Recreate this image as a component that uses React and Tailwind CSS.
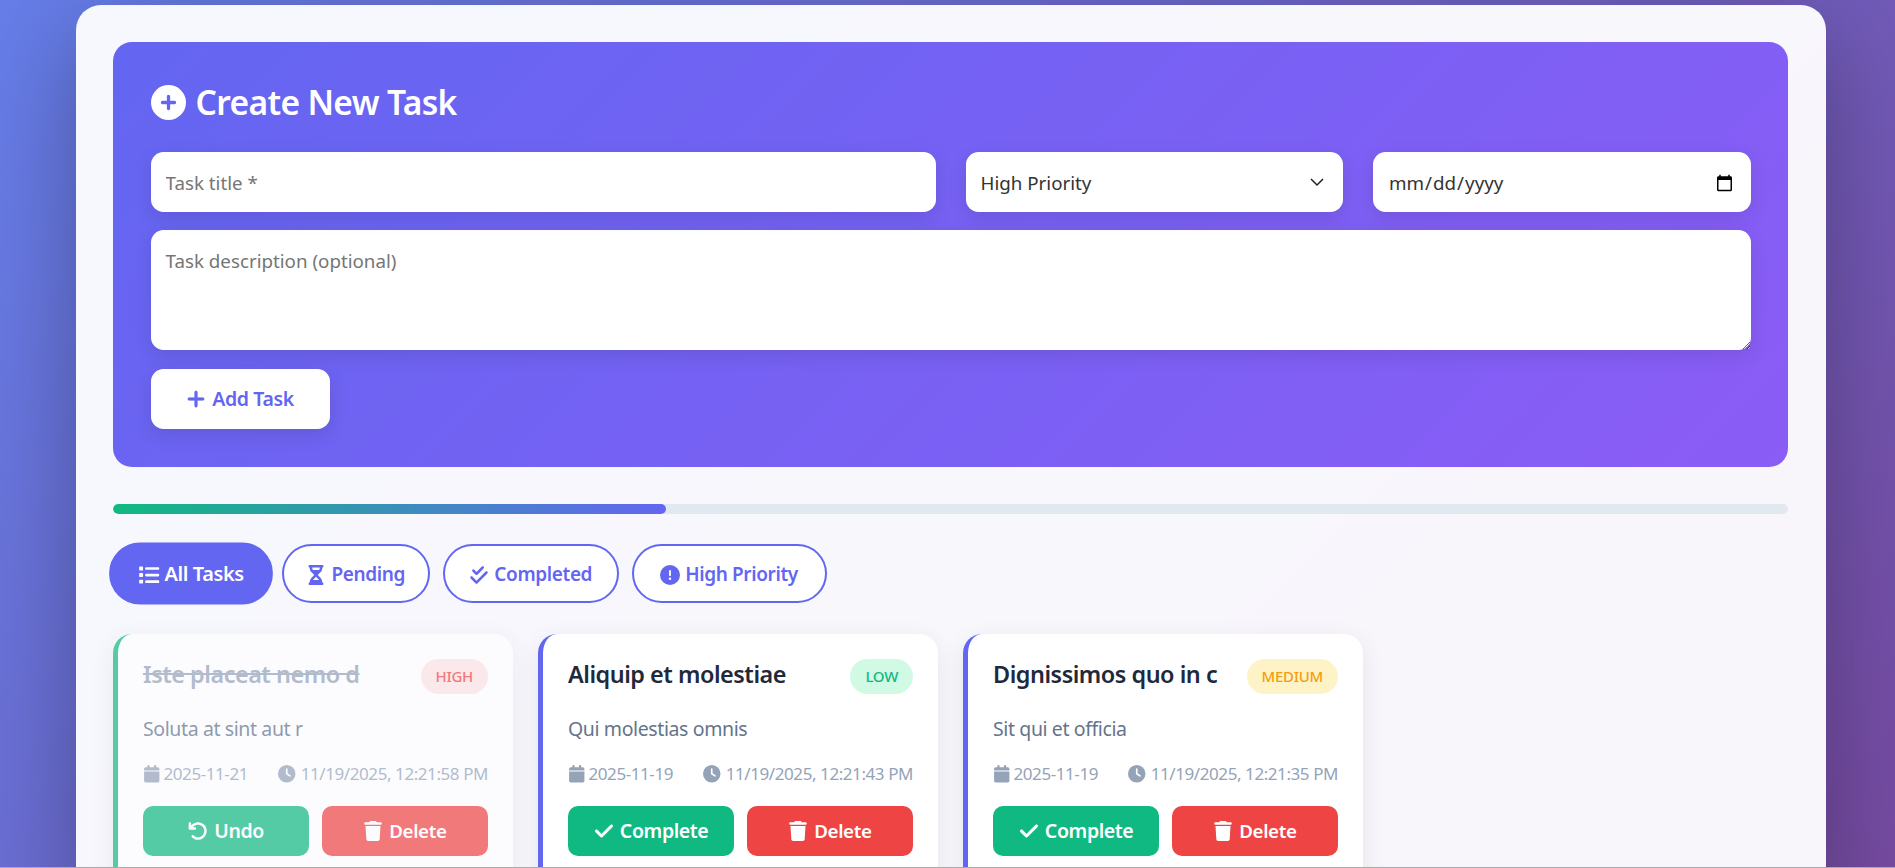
import { FaCirclePlus, FaPlus, FaList, FaHourglassHalf, FaCheckDouble, FaCircleExclamation, FaArrowRotateLeft, FaTrash, FaCheck, FaCalendar, FaClock } from "react-icons/fa6";

const tasks = [
  { title: "Iste placeat nemo d", desc: "Soluta at sint aut r", priority: "high", due: "2025-11-21", created: "11/19/2025, 12:21:58 PM", done: true },
  { title: "Aliquip et molestiae", desc: "Qui molestias omnis", priority: "low", due: "2025-11-19", created: "11/19/2025, 12:21:43 PM", done: false },
  { title: "Dignissimos quo in c", desc: "Sit qui et officia", priority: "medium", due: "2025-11-19", created: "11/19/2025, 12:21:35 PM", done: false },
];

const badgeClass = {
  high: "bg-[#fee2e2] text-[#ef4444]",
  low: "bg-[#d1fae5] text-[#10b981]",
  medium: "bg-[#fef3c7] text-[#f59e0b]",
};

const filters = [
  { label: "All Tasks", Icon: FaList, width: "w-[156px]", active: true },
  { label: "Pending", Icon: FaHourglassHalf, width: "w-[148.5px]" },
  { label: "Completed", Icon: FaCheckDouble, width: "w-[176.5px]" },
  { label: "High Priority", Icon: FaCircleExclamation, width: "w-[195px]" },
];

const fieldClass = "h-[60px] w-full rounded-[12.5px] bg-white px-[15px] text-[18.75px] text-[#333] shadow-[0_6px_19px_rgba(0,0,0,0.1)] outline-none placeholder:text-[#757575]";

const TaskCard = ({ task }) => (
  <div className={`w-[400px] h-[260px] rounded-[19px] border-l-[5px] bg-white p-[25px] shadow-[0_6px_25px_rgba(0,0,0,0.08)] ${task.done ? "border-[#10b981] opacity-70" : "border-[#6366f1]"}`}>
    <div className="flex h-[35px] items-start justify-between">
      <h3 className={`text-[23.4px] leading-[30px] font-semibold tracking-[-0.02em] ${task.done ? "text-[#94a3b8] line-through" : "text-[#1e293b]"}`}>{task.title}</h3>
      <span className={`flex h-[35px] items-center rounded-full px-[15px] text-[15px] font-medium uppercase tracking-[-0.02em] ${badgeClass[task.priority]}`}>{task.priority}</span>
    </div>
    <p className="mt-[20px] text-[19.5px] leading-[30px] tracking-[-0.02em] text-[#64748b]">{task.desc}</p>
    <div className="mt-[17px] flex h-[26px] items-center justify-between text-[17px] tracking-[-0.025em] text-[#94a3b8]">
      <span className="flex items-center gap-[3px]"><FaCalendar className="text-[17.5px]" />{task.due}</span>
      <span className="flex items-center gap-[5px]"><FaClock className="text-[17.5px]" />{task.created}</span>
    </div>
    <div className="mt-[19px] flex gap-[12.5px]">
      <button className="flex h-[50px] flex-1 items-center justify-center gap-[6px] rounded-[10px] bg-[#10b981] text-[19.5px] font-semibold tracking-[-0.02em] text-white">
        {task.done ? <FaArrowRotateLeft className="text-[20px]" /> : <FaCheck className="stroke-[16] text-[20px]" />}
        {task.done ? "Undo" : "Complete"}
      </button>
      <button className="flex h-[50px] flex-1 items-center justify-center gap-[6px] rounded-[10px] bg-[#ef4444] text-[18.75px] font-semibold tracking-[-0.02em] text-white">
        <FaTrash className="text-[20px]" />
        Delete
      </button>
    </div>
  </div>
);

export default function App() {
  return (
    <div className="h-screen overflow-hidden border-b border-[#aaa] bg-[linear-gradient(135deg,#667eea_0%,#764ba2_100%)] pt-[5px] pr-[69px] pl-[76px] font-['Noto_Sans',sans-serif]">
      <div className="h-[900px] rounded-[25px] bg-white/95 py-[37px] pr-[38px] pl-[37px] shadow-[0_25px_100px_rgba(0,0,0,0.3)]">
        <div className="rounded-[19px] bg-[linear-gradient(135deg,#6366f1_0%,#8b5cf6_100%)] px-[37.5px] pt-[37.5px] pb-[38px]">
          <h2 className="mb-[27px] flex h-[45px] items-center gap-[10px] text-[33.6px] font-semibold tracking-[-0.02em] text-white">
            <FaCirclePlus className="text-[35px]" />
            Create New Task
          </h2>
          <div className="grid grid-cols-[785px_1fr_1fr] gap-[30px]">
            <input className={`${fieldClass} pt-[2px]`} placeholder="Task title *" />
            <div className="relative">
              <select defaultValue="high" className={`${fieldClass} appearance-none pt-[3px]`}>
                <option value="low">Low Priority</option>
                <option value="medium">Medium Priority</option>
                <option value="high">High Priority</option>
              </select>
              <svg className="absolute top-[25px] right-[19px] h-[10px] w-[14px]" viewBox="0 0 14 10" fill="none" stroke="#222" strokeWidth="1.5"><path d="M1 2l6 6 6-6" /></svg>
            </div>
            <input type="date" className={`${fieldClass} pt-[3px]`} />
          </div>
          <textarea className={`${fieldClass} mt-[18px] block h-[120px] pt-[17px] pb-[13px]`} placeholder="Task description (optional)" />
          <button className="mt-[19.5px] flex h-[60px] w-[179px] items-center justify-center gap-[6px] rounded-[12.5px] bg-white text-[19.5px] font-semibold tracking-[-0.02em] text-[#6366f1] shadow-[0_6px_19px_rgba(0,0,0,0.1)]">
            <FaPlus className="stroke-[16] text-[20px]" />
            Add Task
          </button>
        </div>

        <div className="mt-[37px] h-[10px] overflow-hidden rounded-full bg-[#e2e8f0]">
          <div className="h-full rounded-full bg-[linear-gradient(90deg,#10b981,#6366f1)]" style={{ width: "33%" }} />
        </div>

        <div className="mt-[30px] flex gap-[12.5px]">
          {filters.map(({ label, Icon, width, active }) => (
            <button key={label} className={`flex h-[59px] items-center justify-center gap-[5px] rounded-full border-[2.5px] border-[#6366f1] pt-[2px] text-[19px] font-semibold tracking-[-0.02em] ${width} ${active ? "scale-105 bg-[#6366f1] text-white" : "bg-white text-[#6366f1]"}`}>
              <Icon className="text-[20px]" />
              {label}
            </button>
          ))}
        </div>

        <div className="mt-[31px] flex gap-[25px]">
          {tasks.map((task) => <TaskCard key={task.title} task={task} />)}
        </div>
      </div>
    </div>
  );
}
